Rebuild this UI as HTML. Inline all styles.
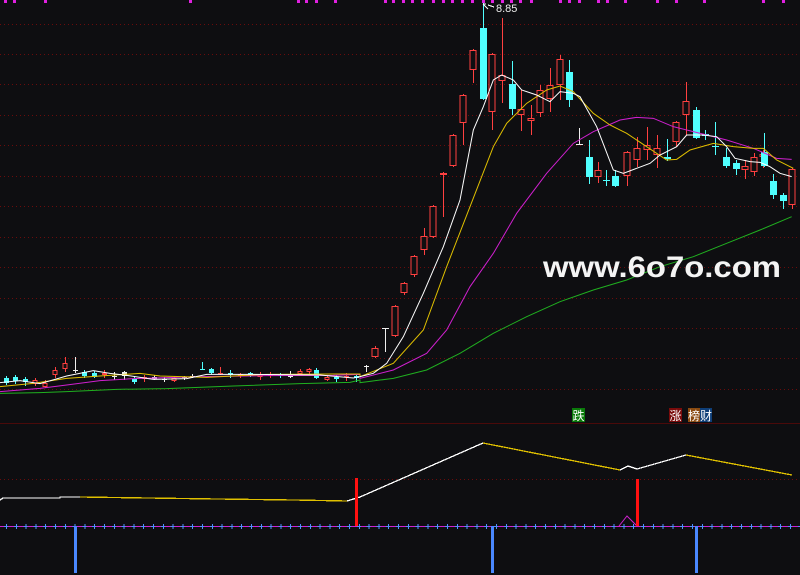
<!DOCTYPE html>
<html><head><meta charset="utf-8"><style>
html,body{margin:0;padding:0;background:#0e0e11;width:800px;height:575px;overflow:hidden}
svg{display:block}
</style></head><body>
<svg id="s" width="800" height="575" xmlns="http://www.w3.org/2000/svg" shape-rendering="crispEdges">
<rect width="800" height="575" fill="#0e0e11"/>
<g id="grid" stroke="#6a0c0c" stroke-dasharray="1,3" stroke-width="1"></g>
<line x1="0" y1="423.5" x2="800" y2="423.5" stroke="#4a0a0a"/>
<line x1="0" y1="479.5" x2="800" y2="479.5" stroke="#6a0c0c" stroke-dasharray="1,3"/>
<g id="top"></g>
<g id="candles"></g>
<g id="lines" fill="none" stroke-width="1" shape-rendering="auto"></g>
<g id="bot"></g>
<text x="543" y="277" font-family="Liberation Sans, sans-serif" font-weight="bold" font-size="30" fill="#f4f4f4" textLength="238" lengthAdjust="spacingAndGlyphs">www.6o7o.com</text>
<line x1="483" y1="4" x2="488" y2="9" stroke="#fff" shape-rendering="auto"/>
<line x1="483" y1="4" x2="486" y2="4" stroke="#fff"/>
<line x1="488" y1="5" x2="494" y2="7" stroke="#fff"/>
<text x="496" y="12" font-family="Liberation Sans, sans-serif" font-size="11" fill="#eee">8.85</text>
<rect x="572" y="408" width="13" height="14" fill="#0a7a0a"/>
<text x="572.5" y="420" font-family="Noto Sans CJK SC, sans-serif" font-size="12" fill="#fff">跌</text>
<rect x="669" y="408" width="13" height="14" fill="#7a0b0b"/>
<text x="669.5" y="420" font-family="Noto Sans CJK SC, sans-serif" font-size="12" fill="#fff">涨</text>
<rect x="688" y="408" width="12" height="14" fill="#8a4a10"/>
<rect x="700" y="408" width="12" height="14" fill="#0e3e78"/>
<text x="688" y="420" font-family="Noto Sans CJK SC, sans-serif" font-size="12" fill="#fff">榜财</text>
</svg>
<script>
var NS="http://www.w3.org/2000/svg";
function el(p,t,a){var e=document.createElementNS(NS,t);for(var k in a)e.setAttribute(k,a[k]);document.getElementById(p).appendChild(e);return e;}
[24,54,84,115,145,176,206,237,267,298,328,358,389].forEach(function(y){el('grid','line',{x1:0,y1:y+.5,x2:800,y2:y+.5});});
[5,14,45,190,298,306,316,335,385,393,403,412,422,433,443,452,462,472,483,492,502,511,520,531,560,569,579,598,607,625,657,676,704,763,783].forEach(function(x){el('top','rect',{x:x-1,y:0,width:3,height:3,fill:'#e020e0'});});
var R='#ff4040',C='#50ffff',W='#eeeeee';
var cs=[
[6,378,383,376,385,C],[15,377,381,375,384,C],[25,379,382,377,386,C],[35,380,384,378,386,R],[45,383,387,380,388,R],
[55,370,375,367,378,R],[65,363,369,357,372,R],[75,370,371,357,373,W],[84,372,376,370,378,C],[94,373,377,371,378,C],
[104,373,375,370,378,R],[114,376,377,372,380,W],[124,372,376,371,380,W],[134,379,382,376,384,C],[144,377,379,375,382,R],
[154,377,379,375,380,W],[164,379,380,377,382,W],[174,378,381,376,382,R],[184,377,378,376,380,W],[192,376,377,374,378,W],
[202,369,370,362,370,C],[211,369,373,368,374,C],[220,373,374,367,375,R],[230,373,375,370,378,C],[240,374,376,373,378,R],
[250,373,375,372,377,C],[260,374,377,372,380,R],[270,374,376,372,378,R],[280,375,376,373,378,C],[290,374,377,371,378,W],
[300,371,374,369,376,R],[309,369,372,368,374,R],[316,370,378,368,379,C],[327,377,380,375,381,R],[336,377,379,375,382,C],
[346,376,377,373,381,R],[356,376,378,374,382,C],[366,366,367,365,372,W],
[375,348,357,346,358,R],[385,328,329,328,352,W],[395,306,336,305,337,R],[404,283,293,282,295,R],[414,256,275,255,277,R],
[424,236,250,228,255,R],[433,206,237,205,238,R],[443,173,175,172,217,R],[453,135,166,134,167,R],[463,95,123,94,145,R],
[473,50,70,49,83,R],[483,28,99,3,100,C],[492,54,112,53,130,R],[502,75,81,18,103,R],[512,84,109,61,115,C],
[521,109,115,90,131,R],[531,118,121,105,135,R],[540,90,113,85,117,R],[550,85,99,68,112,R],[560,59,85,55,100,R],
[569,72,100,60,107,C],[579,144,145,128,145,W],[589,157,177,140,184,C],[598,170,177,162,183,R],[606,180,181,170,186,C],
[615,176,186,170,187,C],[627,152,176,151,186,R],[637,148,160,137,167,R],[647,145,150,127,160,R],[657,148,155,135,168,R],
[667,157,159,139,161,C],[676,122,142,121,147,R],[686,101,115,82,135,R],[696,110,138,107,139,C],[705,134,136,130,140,C],
[715,146,147,122,155,C],[726,157,166,148,168,C],[736,163,169,160,175,C],[745,166,170,160,179,R],[754,157,172,153,176,R],
[763,154,157,150,168,R],[764,152,166,133,167,C],[773,181,195,174,199,C],[783,195,201,193,209,C],[792,169,205,168,209,R]];
cs.forEach(function(c){var x=c[0],w=(c[0]>370?7:5);
el('candles','line',{x1:x+.5,y1:c[3],x2:x+.5,y2:c[4],stroke:c[5]});
var h=Math.max(1,c[2]-c[1]);
if(c[5]==R&&h>2)el('candles','rect',{x:x-w/2+.5,y:c[1]+.5,width:w-1,height:h-1,fill:'#0e0e11',stroke:R});
else el('candles','rect',{x:x-w/2+.5,y:c[1],width:w,height:h,fill:c[5]});});
function conv(a){var o=[];for(var i=0;i<a.length;i+=2)o.push((360+a[i]/3)+','+(a[i+1]/3));return o;}
function convL(a){var o=[];for(var i=0;i<a.length;i+=2)o.push((a[i]/3)+','+(340+a[i+1]/3));return o;}
function pl(pts,col){el('lines','polyline',{points:pts.join(' '),stroke:col});}
pl(convL([0,160,120,158,200,155,350,148,500,146,700,138,900,131,1050,127,1080,120]).concat(conv([0,1148,100,1135,200,1110,300,1060,400,1000,500,950,600,905,700,870,800,840,900,800,1000,770,1100,730,1200,690,1295,650])),'#20b020');
pl(convL([0,155,120,145,200,135,300,122,400,116,600,110,800,107,1000,106,1080,103]).concat(conv([0,1135,100,1110,200,1060,260,990,330,860,400,760,470,640,560,520,640,430,700,395,780,360,830,352,880,355,940,380,1000,395,1100,420,1180,445,1250,475,1295,478])),'#d020d0');
pl(convL([0,140,100,130,200,115,300,108,420,100,480,108,620,112,800,103,1000,102,1080,102]).concat(conv([0,1130,100,1090,190,990,260,800,330,620,400,440,440,370,500,310,560,270,600,258,640,275,700,340,750,375,800,400,860,440,920,480,950,478,990,450,1060,430,1120,440,1180,445,1210,445,1250,480,1300,505])),'#e0c000');
pl(convL([0,128,60,122,120,131,200,108,280,92,330,100,380,106,460,118,560,116,620,103,760,103,960,105,1060,114,1080,110]).concat(conv([0,1130,40,1120,80,1090,130,1010,190,880,250,740,300,600,340,390,370,320,400,240,425,225,460,240,485,270,530,285,570,305,600,275,640,280,660,290,710,380,760,510,790,520,830,505,870,490,900,465,950,440,980,405,1030,405,1070,410,1100,440,1125,475,1170,485,1200,487,1230,500,1260,520,1295,530])),'#ffffff');
function bl(pts,col){el('bot','polyline',{points:pts,fill:'none',stroke:col,'stroke-width':1.3});}
bl('0,500 3,498 60,498 60,497 80,497','#fff');
bl('80,497 148,498 217,499 294,500 347,501','#e0c000');
bl('347,501 360,497 483,443','#fff');
bl('483,443 620,470','#e0c000');
bl('620,470 628,466 637,469','#fff');
bl('637,469 686,455','#fff');
bl('686,455 792,475','#e0c000');
el('bot','line',{x1:0,y1:526.5,x2:800,y2:526.5,stroke:'#d020d0'});
el('bot','polyline',{points:'619,526 627,516 637,526',fill:'none',stroke:'#d020d0','shape-rendering':'auto'});
for(var x=6;x<800;x+=9.8){el('bot','line',{x1:x-2,y1:526.5,x2:x+2,y2:526.5,stroke:'#5090ff'});el('bot','line',{x1:x+.5,y1:524,x2:x+.5,y2:529,stroke:'#5090ff'});}
[[355,478],[636,479]].forEach(function(b){el('bot','rect',{x:b[0],y:b[1],width:3,height:526-b[1],fill:'#ff1010'});});
[75,492,696].forEach(function(x){el('bot','rect',{x:x-1,y:526,width:3,height:47,fill:'#4a88ff'});});
</script>
</body></html>
